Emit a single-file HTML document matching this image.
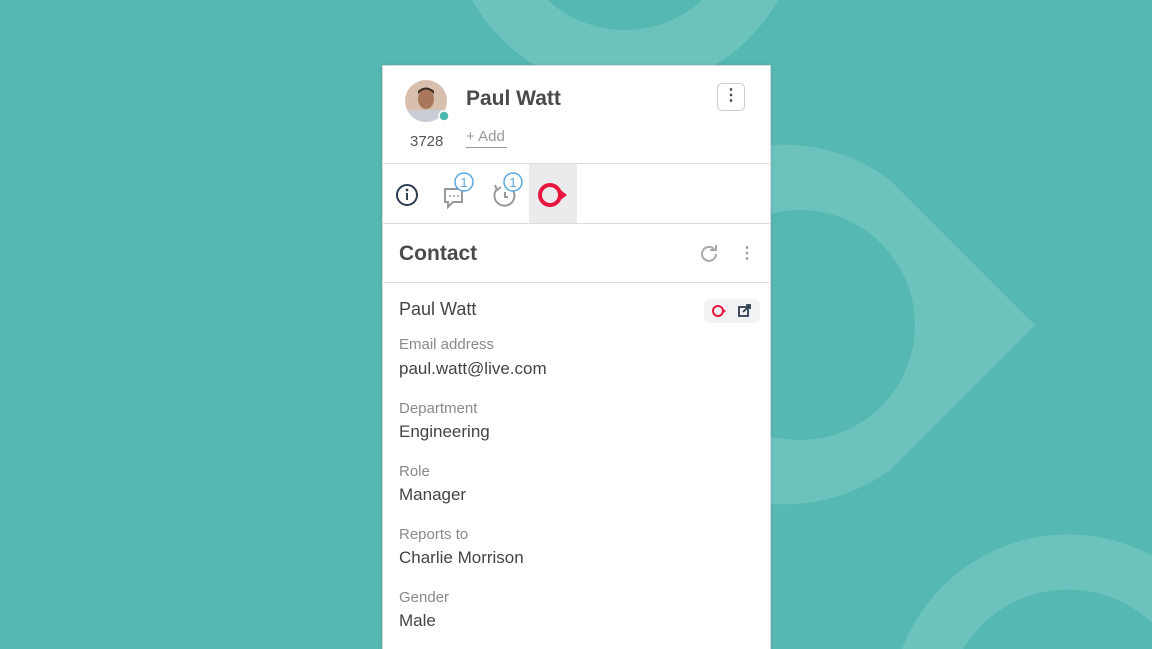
<!DOCTYPE html>
<html><head><style>
html,body{margin:0;width:1152px;height:649px;overflow:hidden}
body{background:#55b8b1;font-family:"Liberation Sans",sans-serif;position:relative}
.bg{position:absolute;left:0;top:0}
.panel{position:absolute;left:382px;top:65px;width:387px;height:583px;background:#fff;border:1px solid #d8d8d8;border-bottom:none;box-shadow:0 0 4px rgba(0,0,0,.1);overflow:hidden}
.abs{position:absolute}
.lbl{position:absolute;left:16px;font-size:15px;color:#8a8a8a}
.val{position:absolute;left:16px;font-size:17px;color:#444}
</style></head><body>
<svg class="bg" width="1152" height="649">
<g fill="none" stroke="#6cc3be">
<circle cx="625" cy="-85" r="145" stroke-width="60"/>
<circle cx="1068" cy="712" r="150" stroke-width="55"/>
</g>
<path fill="#6cc3be" fill-rule="evenodd" d="M770 145 A180 180 0 1 0 890 470 L1035 325 L890 180 A180 180 0 0 0 770 145 Z M800 210 A115 115 0 1 1 799.9 210 Z"/>
</svg>
<div class="panel">
 <svg class="abs" style="left:22px;top:14px" width="46" height="46"><defs><clipPath id="c"><circle cx="21" cy="21" r="21"/></clipPath></defs><circle cx="21" cy="21" r="21" fill="#d8bfae"/><g clip-path="url(#c)"><rect x="4" y="30" width="34" height="14" fill="#c9ced6"/><ellipse cx="21" cy="19" rx="8" ry="10" fill="#a9785c"/><path d="M13 14 Q21 5 29 14 L29 11 Q21 4 13 11Z" fill="#3a2a20"/></g><circle cx="39" cy="36" r="5" fill="#4db8ad" stroke="#fff" stroke-width="1.5"/></svg>
 <div class="abs" style="left:83px;top:21px;font-size:21px;font-weight:bold;color:#4a4a4a">Paul Watt</div>
 <div class="abs" style="left:27px;top:67px;font-size:15px;color:#555">3728</div>
 <div class="abs" style="left:83px;top:62px;font-size:15px;color:#999;border-bottom:1.5px solid #999;padding:0 2px 2px 0">+ Add</div>
 <div class="abs" style="left:334px;top:17px;width:28px;height:28px;border:1px solid #ccc;border-radius:5px;box-sizing:border-box;text-align:center;line-height:24px;color:#444;font-weight:bold;font-size:16px">⋮</div>
 <div class="abs" style="left:0;top:97px;width:387px;height:1px;background:#ddd"></div>
 <div class="abs" style="left:146px;top:98px;width:48px;height:59px;background:#ebebed"></div>
 <svg class="abs" style="left:10px;top:104px" width="180" height="50">
  <circle cx="14" cy="25" r="10" fill="none" stroke="#2c3e50" stroke-width="2"/><circle cx="14" cy="20" r="1.4" fill="#2c3e50"/><rect x="13" y="23" width="2" height="7" fill="#2c3e50"/>
  <path d="M52 19 h17 v13 h-9 l-5 5 v-5 h-3z" fill="none" stroke="#999" stroke-width="2"/><circle cx="57" cy="26" r="1" fill="#999"/><circle cx="61" cy="26" r="1" fill="#999"/><circle cx="65" cy="26" r="1" fill="#999"/>
  <circle cx="71" cy="12" r="9" fill="#fff" stroke="#5aa7e0" stroke-width="1.5"/><text x="71" y="17" font-size="13" text-anchor="middle" fill="#5aa7e0" font-family="Liberation Sans">1</text>
  <path d="M104 19 A10 10 0 1 0 114 16" fill="none" stroke="#999" stroke-width="2"/><path d="M102 15 l2 5 l4 -3" fill="none" stroke="#999" stroke-width="2"/><path d="M112 22 v5 h3" fill="none" stroke="#999" stroke-width="2"/>
  <circle cx="120" cy="12" r="9" fill="#fff" stroke="#5aa7e0" stroke-width="1.5"/><text x="120" y="17" font-size="13" text-anchor="middle" fill="#5aa7e0" font-family="Liberation Sans">1</text>
  <circle cx="157" cy="25" r="10" fill="none" stroke="#e8173f" stroke-width="4"/><path d="M165 18 L174 25 L165 32Z" fill="#e8173f"/>
 </svg>
 <div class="abs" style="left:0;top:157px;width:387px;height:1px;background:#ddd"></div>
 <div class="abs" style="left:16px;top:176px;font-size:21px;font-weight:bold;color:#4a4a4a">Contact</div>
 <svg class="abs" style="left:316px;top:177px" width="20" height="20"><path d="M15 6 A7 7 0 1 0 17 11" fill="none" stroke="#aaa" stroke-width="2"/><path d="M11 5 h6 v-5" fill="none" stroke="#aaa" stroke-width="2" transform="translate(0,2)"/></svg>
 <div class="abs" style="left:356px;top:177px;font-size:16px;color:#999;font-weight:bold">⋮</div>
 <div class="abs" style="left:0;top:216px;width:387px;height:1px;background:#ddd"></div>
 <div class="abs" style="left:16px;top:233px;font-size:18px;color:#444">Paul Watt</div>
 <div class="abs" style="left:321px;top:233px;width:56px;height:24px;background:#f2f2f4;border-radius:6px"></div>
 <svg class="abs" style="left:328px;top:237px" width="46" height="16"><circle cx="7" cy="8" r="5" fill="none" stroke="#e8173f" stroke-width="2"/><path d="M11 5 L15 8 L11 11Z" fill="#e8173f"/><rect x="28" y="4" width="9" height="9" fill="none" stroke="#2c3e50" stroke-width="1.8"/><path d="M32 9 L39 2 M35 2 h4 v4" fill="none" stroke="#2c3e50" stroke-width="1.8"/></svg>
 <div class="lbl" style="top:270px">Email address</div><div class="val" style="top:293px">paul.watt@live.com</div>
 <div class="lbl" style="top:334px">Department</div><div class="val" style="top:356px">Engineering</div>
 <div class="lbl" style="top:397px">Role</div><div class="val" style="top:419px">Manager</div>
 <div class="lbl" style="top:460px">Reports to</div><div class="val" style="top:482px">Charlie Morrison</div>
 <div class="lbl" style="top:523px">Gender</div><div class="val" style="top:545px">Male</div>
</div>
</body></html>
